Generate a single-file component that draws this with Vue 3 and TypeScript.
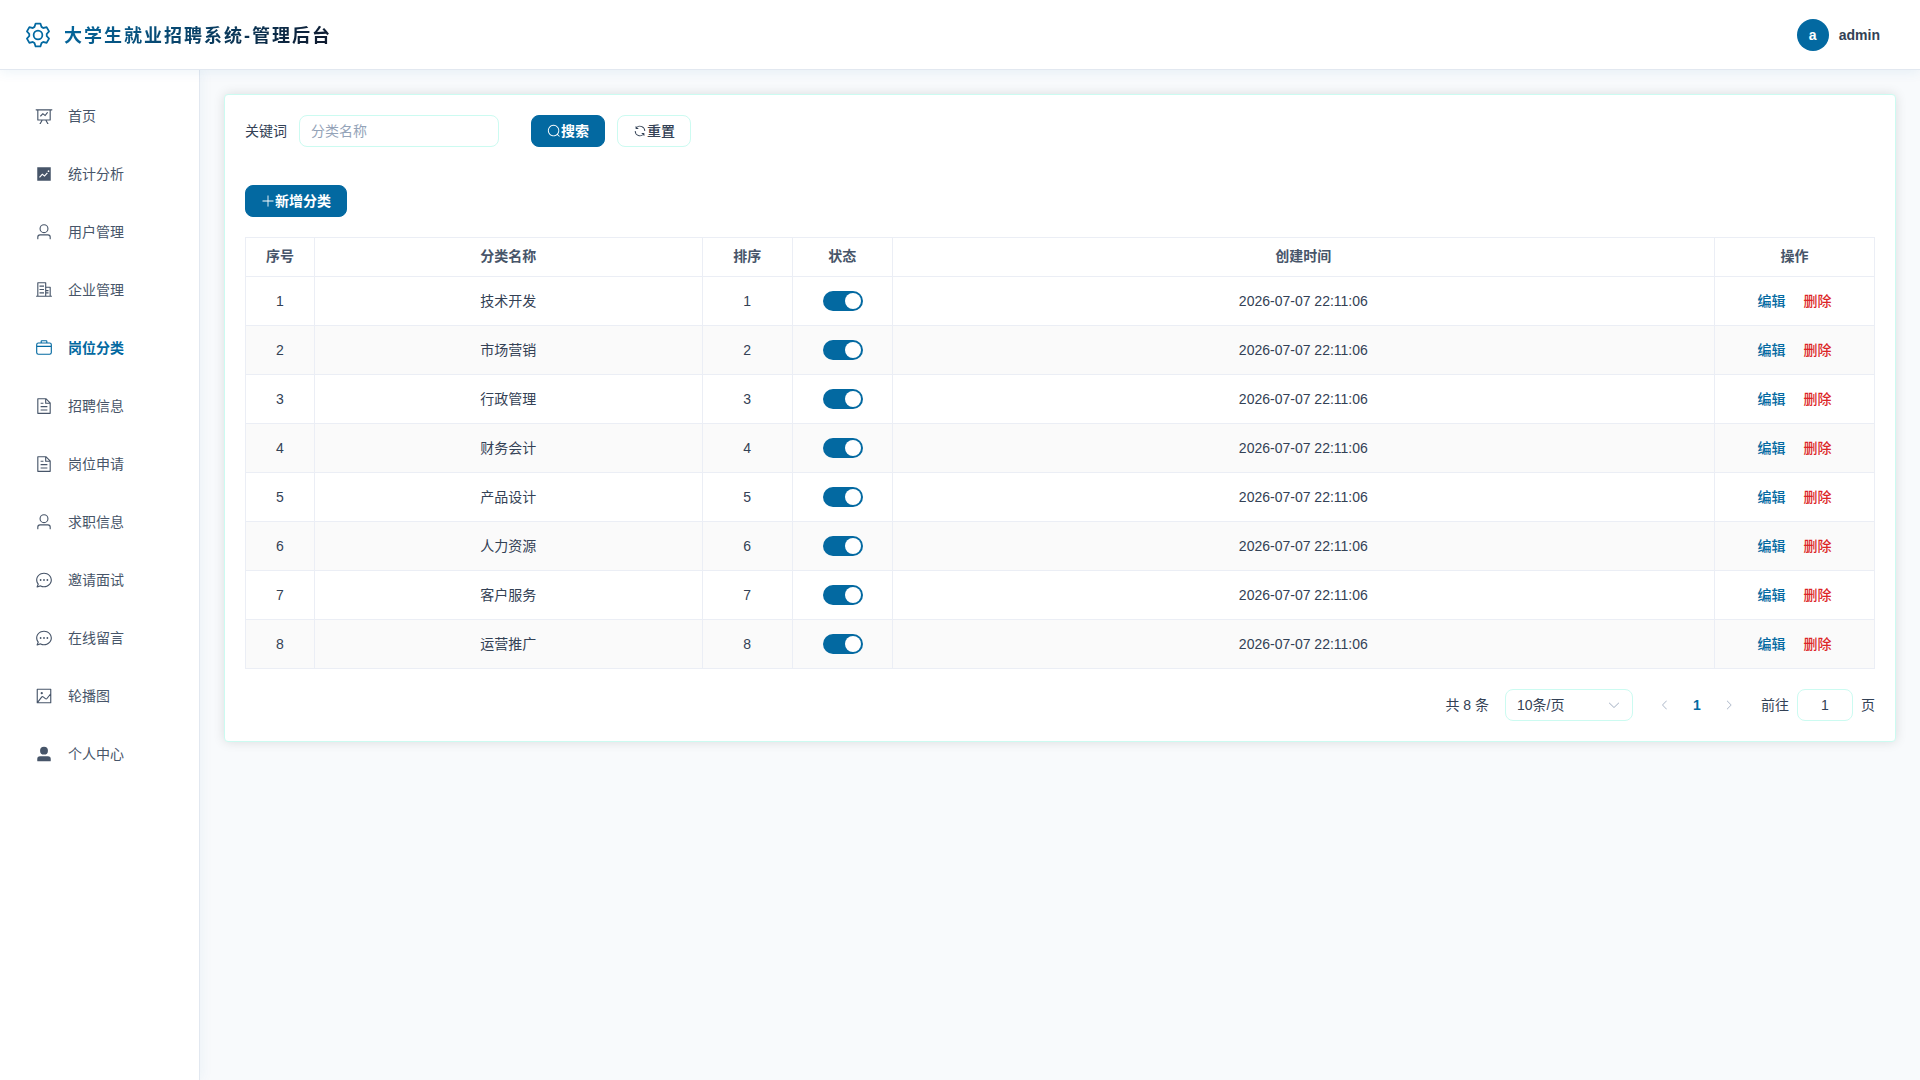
<script setup lang="ts">
import { ref } from 'vue'

interface MenuItem {
  label: string
  icon: string
}

interface Category {
  id: number
  name: string
  enabled: boolean
  createdAt: string
}

const icons: Record<string, string> = {
  setting:
    'M600.704 64a32 32 0 0 1 30.464 22.208l35.2 109.376c14.784 7.232 28.928 15.36 42.432 24.512l112.384-24.192a32 32 0 0 1 34.432 15.36L944.32 364.8a32 32 0 0 1-4.032 37.504l-77.12 85.12a357.12 357.12 0 0 1 0 49.024l77.12 85.248a32 32 0 0 1 4.032 37.504l-88.704 153.6a32 32 0 0 1-34.432 15.296L708.8 803.904c-13.44 9.088-27.648 17.28-42.368 24.512l-35.264 109.376A32 32 0 0 1 600.704 960H423.296a32 32 0 0 1-30.464-22.208L357.696 828.48a351.616 351.616 0 0 1-42.56-24.64l-112.32 24.256a32 32 0 0 1-34.432-15.36L79.68 659.2a32 32 0 0 1 4.032-37.504l77.12-85.248a357.12 357.12 0 0 1 0-48.896l-77.12-85.248A32 32 0 0 1 79.68 364.8l88.704-153.6a32 32 0 0 1 34.432-15.296l112.32 24.256c13.568-9.152 27.776-17.408 42.56-24.64l35.2-109.312A32 32 0 0 1 423.232 64H600.64zm-23.424 64H446.72l-36.352 113.088-24.512 11.968a294.113 294.113 0 0 0-34.816 20.096l-22.656 15.36-116.224-25.088-65.28 113.152 79.68 88.192-1.92 27.136a293.12 293.12 0 0 0 0 40.192l1.92 27.136-79.808 88.192 65.344 113.152 116.224-25.024 22.656 15.296a294.113 294.113 0 0 0 34.816 20.096l24.512 11.968L446.72 896h130.688l36.48-113.152 24.448-11.904a288.282 288.282 0 0 0 34.752-20.096l22.592-15.296 116.288 25.024 65.28-113.152-79.744-88.192 1.92-27.136a293.12 293.12 0 0 0 0-40.256l-1.92-27.136 79.808-88.128-65.344-113.152-116.288 24.96-22.592-15.232a287.616 287.616 0 0 0-34.752-20.096l-24.448-11.904L577.344 128zM512 320a192 192 0 1 1 0 384 192 192 0 0 1 0-384zm0 64a128 128 0 1 0 0 256 128 128 0 0 0 0-256z',
  dataLine:
    'M359.168 768H160a32 32 0 0 1-32-32V192H64a32 32 0 0 1 0-64h896a32 32 0 1 1 0 64h-64v544a32 32 0 0 1-32 32H665.216l110.848 192h-73.792L591.36 768H433.024L322.176 960H248.32l110.848-192zM832 192H192v512h640V192zM342.656 534.656a32 32 0 1 1-45.312-45.312L444.992 341.76l125.44 94.08L679.04 300.032a32 32 0 1 1 49.92 39.936L581.632 524.224 451.008 426.24 342.656 534.592z',
  trend:
    'M128 896V128h768v768H128zm291.712-327.296 128 102.4 180.16-201.792-47.744-42.624-139.84 156.608-128-102.4-180.16 201.792 47.744 42.624 139.84-156.608zM816 352a48 48 0 1 0-96 0 48 48 0 0 0 96 0z',
  user:
    'M512 512a192 192 0 1 0 0-384 192 192 0 0 0 0 384zm0 64a256 256 0 1 1 0-512 256 256 0 0 1 0 512zm320 320v-96a96 96 0 0 0-96-96H288a96 96 0 0 0-96 96v96a32 32 0 1 1-64 0v-96a160 160 0 0 1 160-160h448a160 160 0 0 1 160 160v96a32 32 0 1 1-64 0z',
  office:
    'M192 128v704h384V128H192zm-32-64h448a32 32 0 0 1 32 32v768a32 32 0 0 1-32 32H160a32 32 0 0 1-32-32V96a32 32 0 0 1 32-32zM256 256h256v64H256v-64zm0 192h256v64H256v-64zm0 192h256v64H256v-64zm384-128h128v64H640v-64zm0 128h128v64H640v-64zM64 832h896v64H64v-64zM640 384v448h192V384H640zm-32-64h256a32 32 0 0 1 32 32v512a32 32 0 0 1-32 32H608a32 32 0 0 1-32-32V352a32 32 0 0 1 32-32z',
  suitcase:
    'M128 384h768v-64a64 64 0 0 0-64-64H192a64 64 0 0 0-64 64v64zm0 64v320a64 64 0 0 0 64 64h640a64 64 0 0 0 64-64V448H128zm64-256h640a128 128 0 0 1 128 128v448a128 128 0 0 1-128 128H192A128 128 0 0 1 64 768V320a128 128 0 0 1 128-128zM384 128v64h256v-64H384zm0-64h256a64 64 0 0 1 64 64v64a64 64 0 0 1-64 64H384a64 64 0 0 1-64-64v-64a64 64 0 0 1 64-64z',
  document:
    'M832 384H576V128H192v768h640V384zm-26.496-64L640 154.496V320h165.504zM160 64h480l256 256v608a32 32 0 0 1-32 32H160a32 32 0 0 1-32-32V96a32 32 0 0 1 32-32zm160 448h384v64H320v-64zm0-192h160v64H320v-64zm0 384h384v64H320v-64z',
  chat:
    'm174.72 855.68 135.296-45.12 23.68 11.84C388.096 849.536 448.576 864 512 864c211.84 0 384-166.784 384-352S723.84 160 512 160 128 326.784 128 512c0 69.12 24.96 139.264 70.848 199.232l22.08 28.8-46.272 115.584zm-45.248 82.56A32 32 0 0 1 89.6 896l58.368-145.92C94.72 680.32 64 596.864 64 512 64 299.904 256 96 512 96s448 203.904 448 416-192 416-448 416a461.056 461.056 0 0 1-206.912-48.384l-175.616 58.56zM512 563.2a51.2 51.2 0 1 1 0-102.4 51.2 51.2 0 0 1 0 102.4zm192 0a51.2 51.2 0 1 1 0-102.4 51.2 51.2 0 0 1 0 102.4zm-384 0a51.2 51.2 0 1 1 0-102.4 51.2 51.2 0 0 1 0 102.4z',
  picture:
    'M160 160v704h704V160H160zm-32-64h768a32 32 0 0 1 32 32v768a32 32 0 0 1-32 32H128a32 32 0 0 1-32-32V128a32 32 0 0 1 32-32zM384 288q64 0 64 64t-64 64q-64 0-64-64t64-64zM185.408 876.992l-50.816-38.912L350.72 556.032a96 96 0 0 1 134.592-17.856l1.856 1.472 122.88 99.136a32 32 0 0 0 44.992-4.864l216-269.888 49.92 39.936-215.808 269.824-.256.32a96 96 0 0 1-135.04 14.464l-122.88-99.072-.64-.512a32 32 0 0 0-44.8 5.952L185.408 876.992z',
  userFilled:
    'M288 320a224 224 0 1 0 448 0 224 224 0 1 0-448 0zm544 608H160a32 32 0 0 1-32-32v-96a160 160 0 0 1 160-160h448a160 160 0 0 1 160 160v96a32 32 0 0 1-32 32z',
  search:
    'm795.904 750.72 124.992 124.928a32 32 0 0 1-45.248 45.248L750.656 795.904a416 416 0 1 1 45.248-45.248zM480 832a352 352 0 1 0 0-704 352 352 0 0 0 0 704z',
  refresh:
    'M771.776 794.88A384 384 0 0 1 128 512h64a320 320 0 0 0 555.712 216.448H654.72a32 32 0 1 1 0-64h149.056a32 32 0 0 1 32 32v148.928a32 32 0 1 1-64 0v-50.56zM276.288 295.616h92.992a32 32 0 0 1 0 64H220.16a32 32 0 0 1-32-32V178.56a32 32 0 0 1 64 0v50.56A384 384 0 0 1 896.128 512h-64a320 320 0 0 0-555.776-216.384z',
  plus:
    'M480 480V128a32 32 0 0 1 64 0v352h352a32 32 0 1 1 0 64H544v352a32 32 0 1 1-64 0V544H128a32 32 0 0 1 0-64h352z',
  arrowDown:
    'M831.872 340.864 512 652.672 192.128 340.864a30.592 30.592 0 0 0-42.752 0 29.12 29.12 0 0 0 0 41.6L489.664 714.24a32 32 0 0 0 44.672 0l340.288-331.712a29.12 29.12 0 0 0 0-41.728 30.592 30.592 0 0 0-42.752 0z',
  arrowLeft:
    'M609.408 149.376 277.76 489.6a32 32 0 0 0 0 44.672l331.648 340.352a29.12 29.12 0 0 0 41.728 0 30.592 30.592 0 0 0 0-42.752L339.264 511.936l311.872-319.872a30.592 30.592 0 0 0 0-42.688 29.12 29.12 0 0 0-41.728 0z',
  arrowRight:
    'M340.864 149.312a30.592 30.592 0 0 0 0 42.752L652.736 512 340.864 831.872a30.592 30.592 0 0 0 0 42.752 29.12 29.12 0 0 0 41.728 0L714.24 534.336a32 32 0 0 0 0-44.672L382.592 149.376a29.12 29.12 0 0 0-41.728 0z',
}

const menu: MenuItem[] = [
  { label: '首页', icon: 'dataLine' },
  { label: '统计分析', icon: 'trend' },
  { label: '用户管理', icon: 'user' },
  { label: '企业管理', icon: 'office' },
  { label: '岗位分类', icon: 'suitcase' },
  { label: '招聘信息', icon: 'document' },
  { label: '岗位申请', icon: 'document' },
  { label: '求职信息', icon: 'user' },
  { label: '邀请面试', icon: 'chat' },
  { label: '在线留言', icon: 'chat' },
  { label: '轮播图', icon: 'picture' },
  { label: '个人中心', icon: 'userFilled' },
]

const active = ref('岗位分类')
const keyword = ref('')
const pageSize = ref(10)
const gotoPage = ref('1')

const names = ['技术开发', '市场营销', '行政管理', '财务会计', '产品设计', '人力资源', '客户服务', '运营推广']
const rows = ref<Category[]>(
  names.map((name, i) => ({ id: i + 1, name, enabled: true, createdAt: '2026-07-07 22:11:06' })),
)
</script>

<template>
  <div class="layout">
    <header class="header">
      <div class="brand">
        <svg class="brand-icon" viewBox="0 0 1024 1024" aria-hidden="true"><path :d="icons.setting" /></svg>
        <h1 class="brand-title">大学生就业招聘系统-管理后台</h1>
      </div>
      <div class="account">
        <span class="avatar">a</span>
        <span class="account-name">admin</span>
      </div>
    </header>

    <div class="body">
      <nav class="sidebar">
        <a
          v-for="item in menu"
          :key="item.label"
          href="#"
          class="menu-item"
          :class="{ active: item.label === active }"
          @click.prevent="active = item.label"
        >
          <svg class="menu-icon" viewBox="0 0 1024 1024" aria-hidden="true"><path :d="icons[item.icon]" /></svg>
          <span>{{ item.label }}</span>
        </a>
      </nav>

      <main class="main">
        <section class="card">
          <form class="search" @submit.prevent>
            <label class="search-label" for="keyword">关键词</label>
            <input id="keyword" v-model="keyword" class="input search-input" type="text" placeholder="分类名称" />
            <button class="btn primary" type="submit">
              <svg class="btn-icon" viewBox="0 0 1024 1024" aria-hidden="true"><path :d="icons.search" /></svg>
              <span>搜索</span>
            </button>
            <button class="btn" type="button" @click="keyword = ''">
              <svg class="btn-icon" viewBox="0 0 1024 1024" aria-hidden="true"><path :d="icons.refresh" /></svg>
              <span>重置</span>
            </button>
          </form>

          <div class="toolbar">
            <button class="btn primary" type="button">
              <svg class="btn-icon" viewBox="0 0 1024 1024" aria-hidden="true"><path :d="icons.plus" /></svg>
              <span>新增分类</span>
            </button>
          </div>

          <table class="table">
            <colgroup>
              <col class="col-index" />
              <col class="col-name" />
              <col class="col-sort" />
              <col class="col-status" />
              <col />
              <col class="col-actions" />
            </colgroup>
            <thead>
              <tr>
                <th>序号</th>
                <th>分类名称</th>
                <th>排序</th>
                <th>状态</th>
                <th>创建时间</th>
                <th>操作</th>
              </tr>
            </thead>
            <tbody>
              <tr v-for="row in rows" :key="row.id">
                <td>{{ row.id }}</td>
                <td>{{ row.name }}</td>
                <td>{{ row.id }}</td>
                <td class="status-cell">
                  <input v-model="row.enabled" class="switch" type="checkbox" role="switch" :aria-label="row.name" />
                </td>
                <td>{{ row.createdAt }}</td>
                <td>
                  <div class="actions">
                    <button class="link" type="button">编辑</button>
                    <button class="link danger" type="button">删除</button>
                  </div>
                </td>
              </tr>
            </tbody>
          </table>

          <div class="pagination">
            <span>共 {{ rows.length }} 条</span>
            <div class="select-wrap">
              <select v-model="pageSize" class="input select" aria-label="每页条数">
                <option :value="10">10条/页</option>
                <option :value="20">20条/页</option>
                <option :value="50">50条/页</option>
              </select>
              <svg class="select-arrow" viewBox="0 0 1024 1024" aria-hidden="true"><path :d="icons.arrowDown" /></svg>
            </div>
            <div class="pager">
              <button class="page-btn" type="button" disabled aria-label="上一页">
                <svg class="page-icon" viewBox="0 0 1024 1024"><path :d="icons.arrowLeft" /></svg>
              </button>
              <button class="page-btn current" type="button">1</button>
              <button class="page-btn" type="button" disabled aria-label="下一页">
                <svg class="page-icon" viewBox="0 0 1024 1024"><path :d="icons.arrowRight" /></svg>
              </button>
            </div>
            <div class="jump">
              <label for="goto">前往</label>
              <input id="goto" v-model="gotoPage" class="input jump-input" type="text" />
              <span>页</span>
            </div>
          </div>
        </section>
      </main>
    </div>
  </div>
</template>

<style>
body {
  margin: 0;
}
</style>

<style scoped>
.layout,
.layout * {
  box-sizing: border-box;
}

.layout {
  display: flex;
  flex-direction: column;
  min-height: 100vh;
  background: #f8fafc;
  color: #334155;
  font-family: "Liberation Sans", "Noto Sans CJK SC", sans-serif;
  font-size: 14px;
  line-height: 22px;
}

svg {
  display: block;
  flex: none;
  fill: currentColor;
}

button,
input,
select {
  font: inherit;
}

.header {
  position: relative;
  z-index: 2;
  display: flex;
  align-items: center;
  justify-content: space-between;
  height: 70px;
  padding: 0 40px 0 24px;
  border-bottom: 1px solid #e2e8f0;
  background: #fff;
  box-shadow: 0 2px 12px rgba(3, 105, 161, 0.08);
}

.brand {
  display: flex;
  align-items: center;
  gap: 12px;
}

.brand-icon {
  width: 28px;
  height: 28px;
  color: #0369a1;
}

.brand-title {
  margin: 0;
  padding-top: 2px;
  font-size: 18px;
  font-weight: 700;
  line-height: 28px;
  letter-spacing: 2px;
  color: transparent;
  background: linear-gradient(135deg, #0369a1, #0f172a);
  background-clip: text;
}

.account {
  display: flex;
  align-items: center;
  gap: 10px;
  font-weight: 600;
}

.avatar {
  display: flex;
  align-items: center;
  justify-content: center;
  width: 32px;
  height: 32px;
  border-radius: 50%;
  background: #0369a1;
  color: #fff;
}

.body {
  display: flex;
  flex: 1;
}

.sidebar {
  position: relative;
  z-index: 1;
  display: flex;
  flex: none;
  flex-direction: column;
  gap: 8px;
  width: 200px;
  padding: 21px 12px;
  border-right: 1px solid #e2e8f0;
  background: #fff;
  box-shadow: 2px 0 12px rgba(3, 105, 161, 0.05);
}

.menu-item {
  display: flex;
  align-items: center;
  gap: 15px;
  height: 50px;
  padding: 0 23px;
  color: #475569;
  text-decoration: none;
}

.menu-item.active {
  color: #0369a1;
  font-weight: 600;
}

.menu-icon {
  width: 18px;
  height: 18px;
}

.main {
  flex: 1;
  min-width: 0;
  padding: 24px;
}

.card {
  padding: 20px;
  border: 1px solid #ccfbf1;
  border-radius: 4px;
  background: #fff;
  box-shadow: 0 0 12px rgba(0, 0, 0, 0.12);
}

.search {
  display: flex;
  align-items: center;
  margin-bottom: 38px;
}

.search-label {
  margin-right: 12px;
}

.input {
  height: 32px;
  padding: 0 11px;
  border: 1px solid #ccfbf1;
  border-radius: 8px;
  outline: none;
  background: #fff;
  color: #334155;
}

.input::placeholder {
  color: #94a3b8;
}

.search-input {
  width: 200px;
  margin-right: 32px;
}

.btn {
  display: inline-flex;
  align-items: center;
  height: 32px;
  padding: 0 15px;
  border: 1px solid #ccfbf1;
  border-radius: 8px;
  background: #fff;
  color: #334155;
  font-weight: 500;
  cursor: pointer;
}

.btn.primary {
  border-color: #0369a1;
  background: #0369a1;
  color: #fff;
  font-weight: 600;
}

.btn + .btn {
  margin-left: 12px;
}

.btn-icon {
  width: 14px;
  height: 14px;
}

.toolbar {
  display: flex;
  margin-bottom: 20px;
}

.table {
  width: 100%;
  border: 0 solid #ebeef5;
  border-width: 1px 0 0 1px;
  border-collapse: separate;
  border-spacing: 0;
  table-layout: fixed;
}

.col-index {
  width: 69px;
}

.col-name {
  width: 23.8%;
}

.col-sort {
  width: 90px;
}

.col-status {
  width: 100px;
}

.col-actions {
  width: 160px;
}

.table th,
.table td {
  padding: 0 12px;
  border: 0 solid #ebeef5;
  border-width: 0 1px 1px 0;
  text-align: center;
}

.table th {
  height: 39px;
  padding-bottom: 2px;
  color: #475569;
  font-weight: 600;
}

.table td {
  height: 49px;
}

.table .status-cell {
  padding-right: 11px;
}

.table tbody tr:nth-child(even) td {
  background: #fafafa;
}

.switch {
  display: block;
  width: 40px;
  height: 20px;
  margin: 0 auto;
  padding: 2px;
  border-radius: 10px;
  background: #cbd5e1;
  appearance: none;
  cursor: pointer;
}

.switch::before {
  display: block;
  width: 16px;
  height: 16px;
  border-radius: 50%;
  background: #fff;
  content: "";
}

.switch:checked {
  background: #0369a1;
}

.switch:checked::before {
  margin-left: 20px;
}

.actions {
  display: flex;
  justify-content: center;
  gap: 18px;
}

.link {
  padding: 0;
  border: 0;
  background: none;
  color: #0369a1;
  font-weight: 500;
  cursor: pointer;
}

.link.danger {
  color: #dc2626;
}

.pagination {
  display: flex;
  align-items: center;
  justify-content: flex-end;
  gap: 16px;
  margin-top: 20px;
}

.select-wrap {
  position: relative;
}

.select {
  display: block;
  width: 128px;
  appearance: none;
}

.select-arrow {
  position: absolute;
  top: 9px;
  right: 12px;
  width: 14px;
  height: 14px;
  color: #a8b4c6;
  pointer-events: none;
}

.pager {
  display: flex;
}

.page-btn {
  display: flex;
  align-items: center;
  justify-content: center;
  width: 32px;
  height: 32px;
  padding: 0;
  border: 0;
  background: none;
  color: #a8b4c6;
}

.page-btn.current {
  color: #0369a1;
  font-weight: 700;
}

.page-icon {
  width: 12px;
  height: 12px;
}

.jump {
  display: flex;
  align-items: center;
  gap: 8px;
}

.jump-input {
  width: 56px;
  text-align: center;
}
</style>
